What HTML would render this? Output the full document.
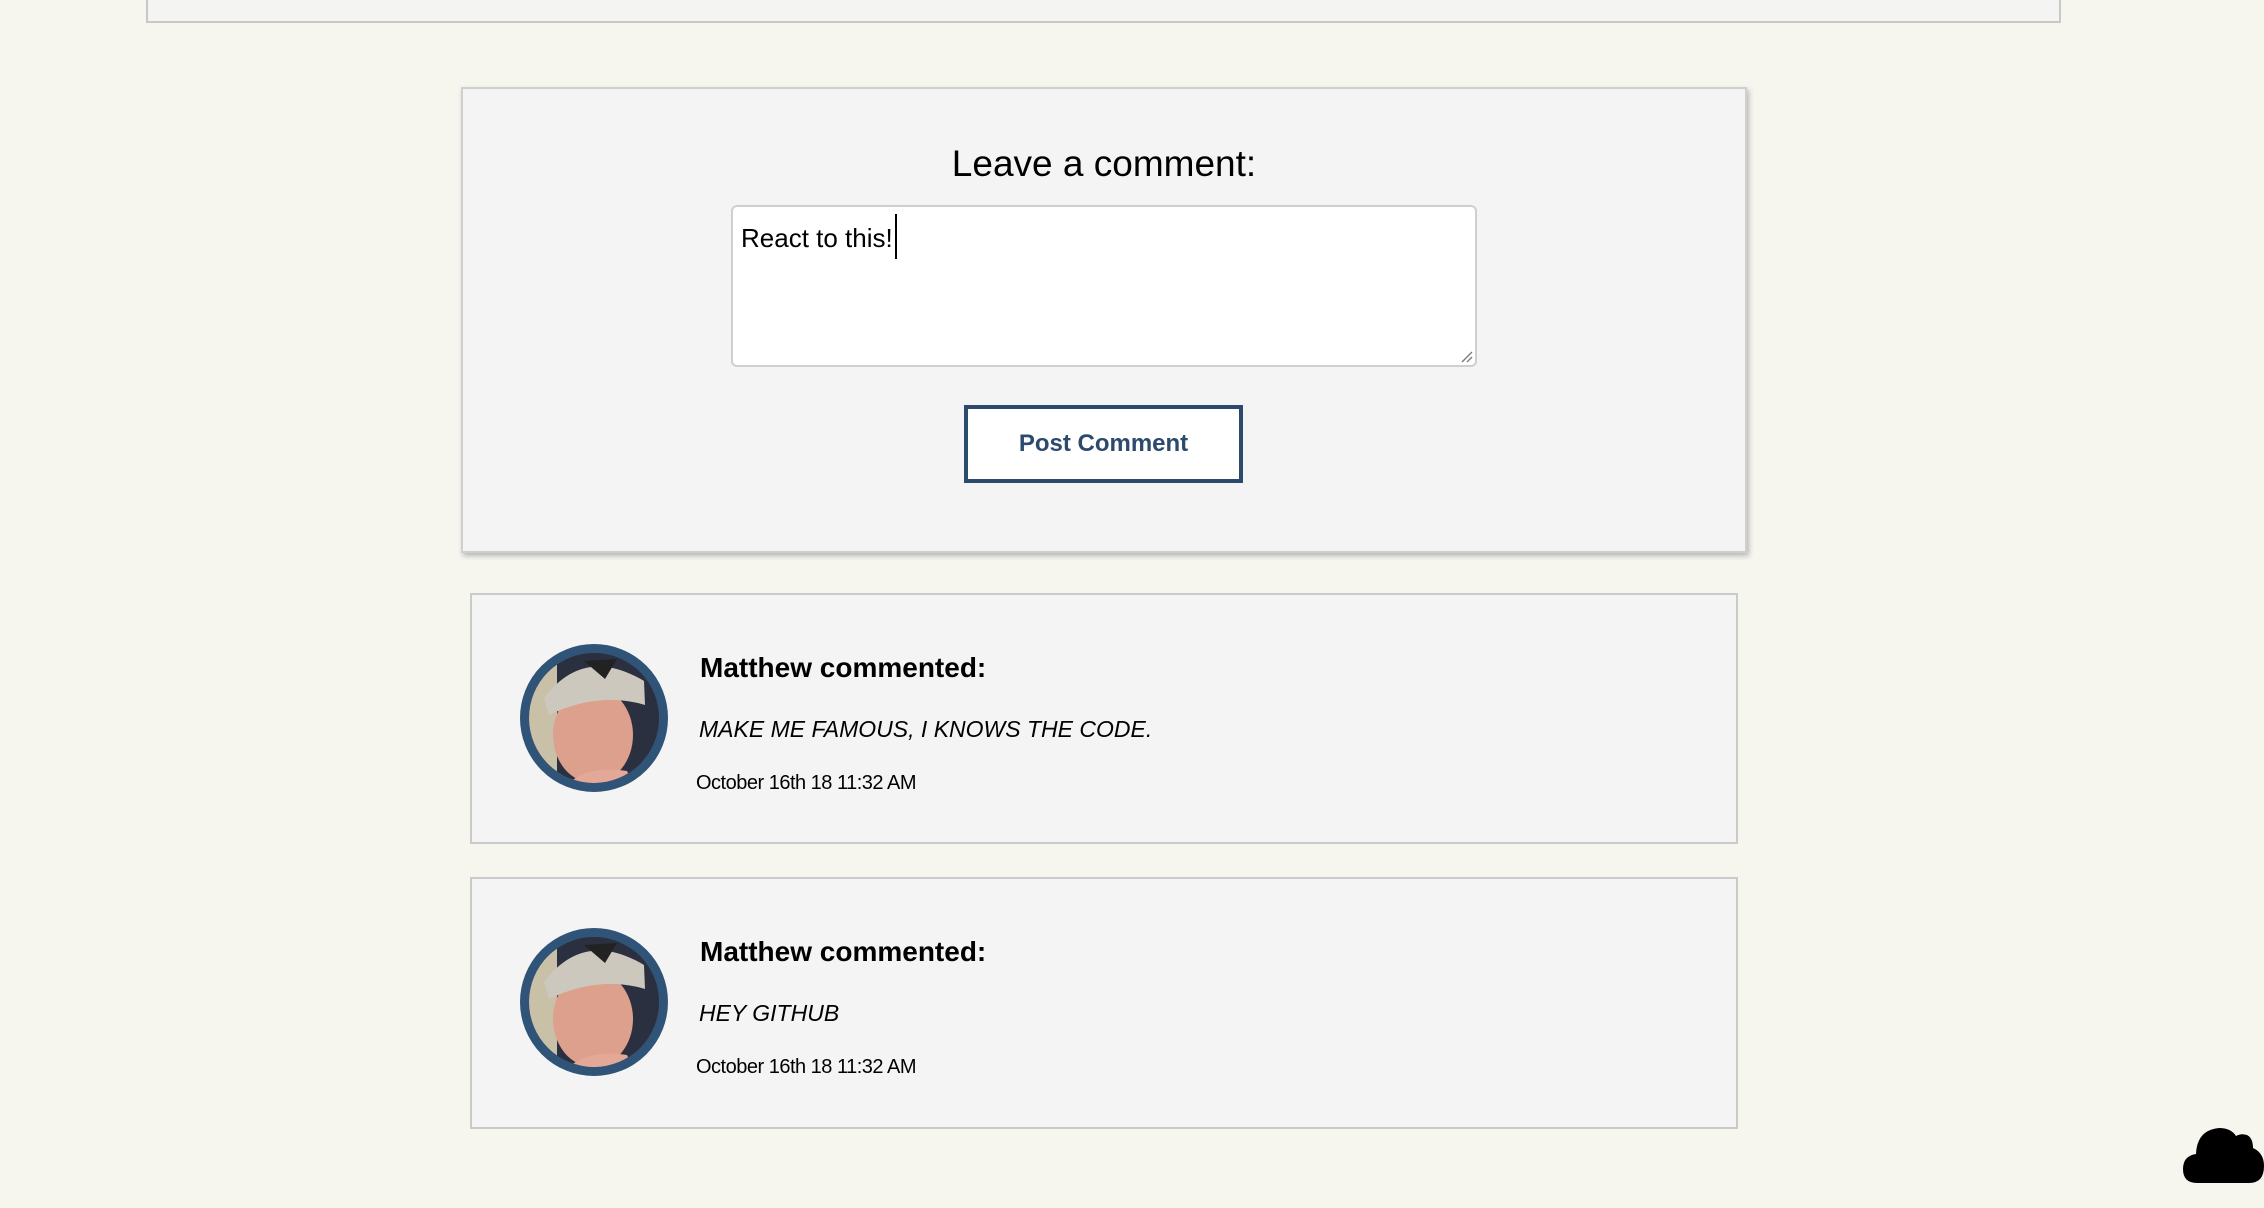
<!DOCTYPE html>
<html><head><meta charset="utf-8"><style>
*{margin:0;padding:0;box-sizing:border-box}
body{width:2264px;height:1208px;background:#f6f6ef;position:relative;overflow:hidden;font-family:"Liberation Sans",sans-serif;color:#000}
.abs{position:absolute}
.topbar{left:146px;top:-4px;width:1915px;height:27px;border:2px solid #c8c8c8;background:#f4f4f2}
.panel{left:461px;top:87px;width:1286px;height:466px;background:#f4f4f4;border:2px solid #cfcfcf;box-shadow:2px 3px 5px rgba(0,0,0,.25)}
.title{left:461px;width:1286px;top:142px;text-align:center;font-size:37px;line-height:44px}
.ta{left:731px;top:205px;width:746px;height:162px;background:#fff;border:2px solid #cfcfcf;border-radius:6px}
.tatext{left:741px;top:221px;font-size:26px;line-height:34px}
.cursor{left:895px;top:214px;width:2px;height:45px;background:#000}
.btn{left:964px;top:405px;width:279px;height:78px;border:4px solid #2c4a6c;background:#fff;color:#2c4a6c;font-weight:bold;font-size:24px;display:flex;align-items:center;justify-content:center}
.card{left:470px;width:1268px;height:251px;background:#f4f4f4;border:2px solid #cacaca}
.av{width:148px;height:148px;border-radius:50%;border:9px solid #2f5478;overflow:hidden;background:#3a4050}
.name{font-weight:bold;font-size:28px;line-height:32px}
.cmt{font-style:italic;font-size:23px;line-height:28px}
.date{font-size:20px;line-height:24px;letter-spacing:-0.5px}
</style></head><body>
<div class="abs topbar"></div>
<div class="abs panel"></div>
<div class="abs title">Leave a comment:</div>
<div class="abs ta"></div>
<svg class="abs" style="left:1460px;top:350px" width="14" height="14"><path d="M2 12 L12 2 M7 12 L12 7" stroke="#777" stroke-width="1.3"/></svg>
<div class="abs tatext">React to this!</div>
<div class="abs cursor"></div>
<div class="abs btn">Post Comment</div>

<div class="abs card" style="top:593px"></div>
<div class="abs av" style="left:520px;top:644px">
<svg width="130" height="130" viewBox="0 0 130 130"><rect width="130" height="130" fill="#2b3040"/><rect x="0" y="0" width="28" height="130" fill="#c9c0a8"/><ellipse cx="64" cy="82" rx="40" ry="48" fill="#dca08c"/><path d="M15 45 Q55 -8 115 28 L116 52 Q70 38 20 62 Z" fill="#cdc8bd"/><path d="M55 8 L88 6 L76 26 Z" fill="#222"/><path d="M40 130 Q60 112 98 118 L104 130 Z" fill="#e4a898"/></svg>
</div>
<div class="abs name" style="left:700px;top:652px">Matthew commented:</div>
<div class="abs cmt" style="left:699px;top:715px">MAKE ME FAMOUS, I KNOWS THE CODE.</div>
<div class="abs date" style="left:696px;top:771px">October 16th 18 11:32 AM</div>

<div class="abs card" style="top:877px;height:252px"></div>
<div class="abs av" style="left:520px;top:928px">
<svg width="130" height="130" viewBox="0 0 130 130"><rect width="130" height="130" fill="#2b3040"/><rect x="0" y="0" width="28" height="130" fill="#c9c0a8"/><ellipse cx="64" cy="82" rx="40" ry="48" fill="#dca08c"/><path d="M15 45 Q55 -8 115 28 L116 52 Q70 38 20 62 Z" fill="#cdc8bd"/><path d="M55 8 L88 6 L76 26 Z" fill="#222"/><path d="M40 130 Q60 112 98 118 L104 130 Z" fill="#e4a898"/></svg>
</div>
<div class="abs name" style="left:700px;top:936px">Matthew commented:</div>
<div class="abs cmt" style="left:699px;top:999px">HEY GITHUB</div>
<div class="abs date" style="left:696px;top:1055px">October 16th 18 11:32 AM</div>

<svg class="abs" style="left:2183px;top:1126px" width="81" height="58" viewBox="0 0 81 58"><path d="M14 57 Q0 57 0 43 Q0 30 13 28 Q14 4 36 2 Q48 2 53 10 Q58 7 64 9 Q70 12 70 22 Q81 27 81 40 Q81 57 66 57 Z" fill="#000"/></svg>
</body></html>
